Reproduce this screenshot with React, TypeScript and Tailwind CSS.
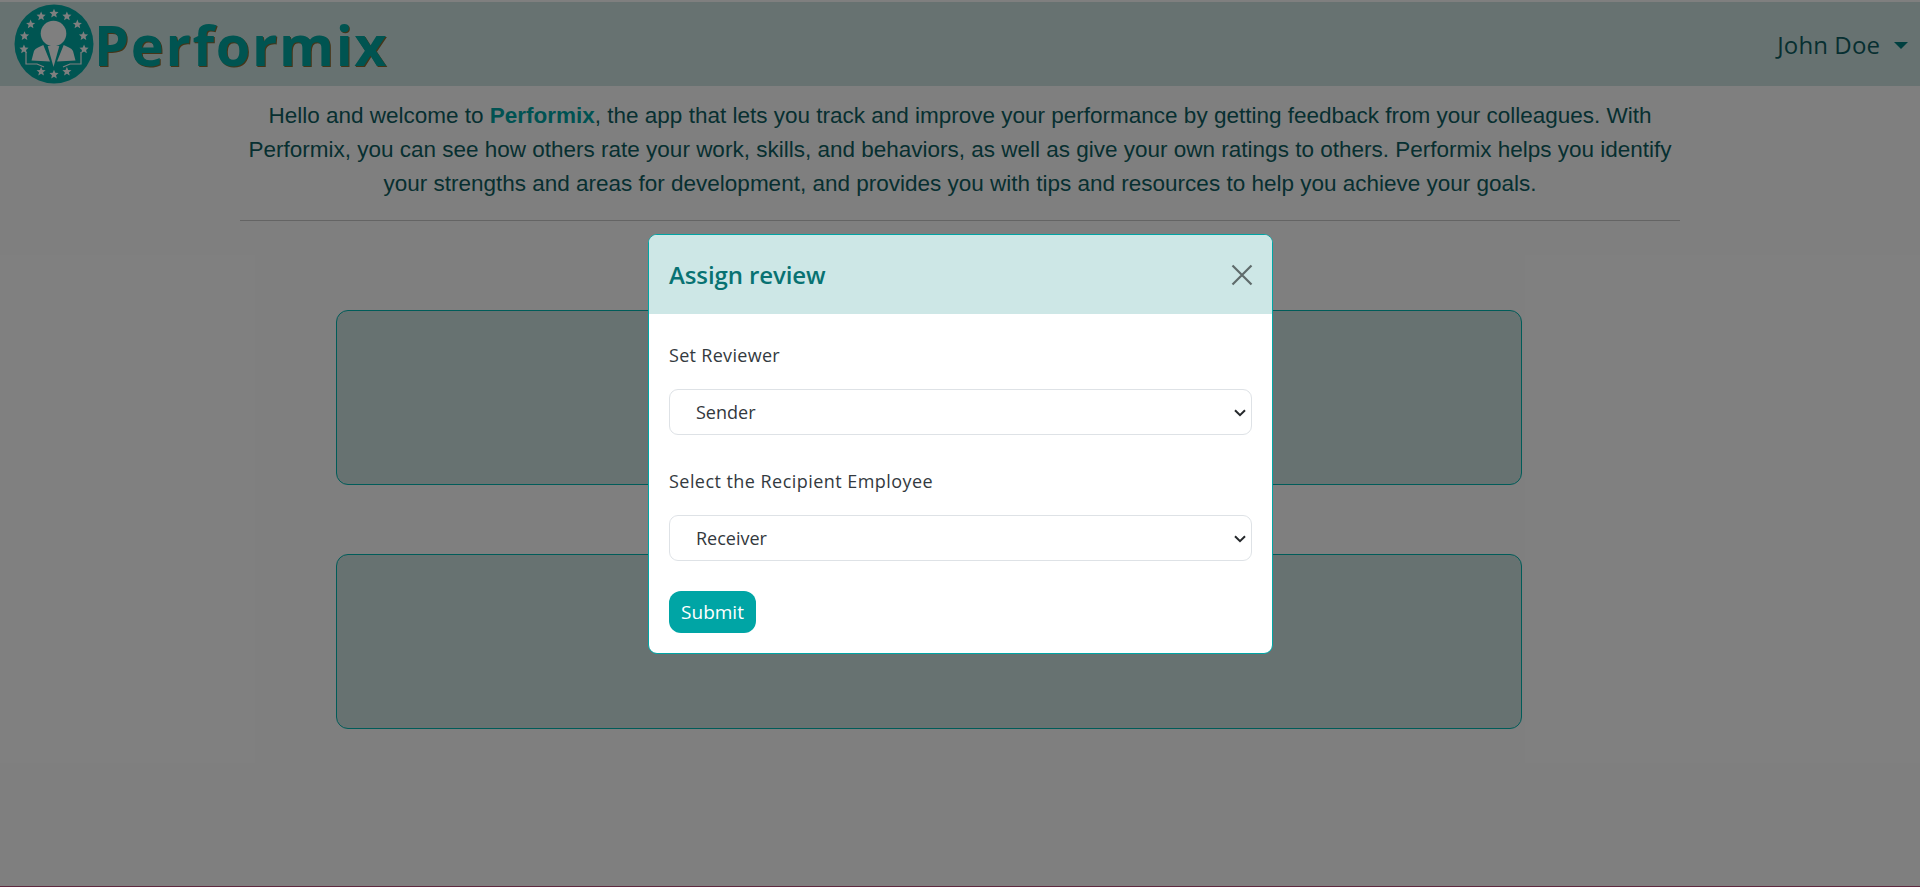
const SEGOE = 'font-["Open_Sans",sans-serif]';

// star ring of the logo, skipping the gaps around the shoulders
const STAR_ANGLES = [-90, -65, -40, -115, -140, -165, -15, 10, 170, 65, 90, 115];

function starPoints(cx: number, cy: number, r: number) {
  const pts: string[] = [];
  for (let i = 0; i < 10; i++) {
    const a = (-90 + i * 36) * (Math.PI / 180);
    const rad = i % 2 === 0 ? r : r * 0.45;
    pts.push(`${(cx + Math.cos(a) * rad).toFixed(2)},${(cy + Math.sin(a) * rad).toFixed(2)}`);
  }
  return pts.join(' ');
}

function LogoMark() {
  return (
    <svg width="80" height="80" viewBox="0 0 80 80" className="shrink-0">
      <circle cx="40" cy="40" r="39.5" fill="#00aaa5" />
      {STAR_ANGLES.map((deg) => {
        const a = deg * (Math.PI / 180);
        return <polygon key={deg} points={starPoints(40 + Math.cos(a) * 30.5, 40 + Math.sin(a) * 30.5, 4.8)} fill="#ffffff" />;
      })}
      <circle cx="39.5" cy="29.5" r="12.8" fill="#ffffff" />
      <path d="M17.5 56.5 L20 47 Q21 44.5 24 43.5 L29.3 41 L36 57.5 Z" fill="#ffffff" />
      <path d="M61.5 56.5 L59 47 Q58 44.5 55 43.5 L49.7 41 L43 57.5 Z" fill="#ffffff" />
      <path d="M33.7 42 L45.3 42 L39.5 63 Z" fill="#ffffff" />
      <path d="M12 48 L12 60 L23 60 L30 63 M67 48 L67 60 L56 60 L49 63" fill="none" stroke="#ffffff" strokeWidth="1.2" />
    </svg>
  );
}

function ReviewSelect({ value }: { value: string }) {
  return (
    <div className="relative">
      <select
        defaultValue={value}
        className={`${SEGOE} block h-[46px] w-full appearance-none rounded-[9px] border border-[#dee2e6] bg-white pl-[26px] pr-6 pt-[1px] text-[18px] text-[#33383d]`}
      >
        <option value={value}>{value}</option>
      </select>
      <svg width="12" height="8" viewBox="0 0 12 8" fill="none" stroke="#26292c" strokeWidth="2" className="pointer-events-none absolute right-[6px] top-[20px]">
        <path d="M1 1.2 L6 6.2 L11 1.2" />
      </svg>
    </div>
  );
}

export default function App() {
  return (
    <div className="relative flex min-h-screen flex-col overflow-hidden bg-white pt-[2px]">
      <header className="flex h-[84px] shrink-0 items-center justify-between bg-[#cfe5e3] pl-[14px] pr-[12px]">
        <div className="flex items-center">
          <LogoMark />
          <span
            className={`${SEGOE} text-[56px] font-bold leading-none tracking-[1.6px] text-[#00a8a2] [text-shadow:1px_1px_0_#8a6a30]`}
          >
            Performix
          </span>
        </div>
        <div className={`${SEGOE} flex items-center gap-[14px] pt-[2px] text-[24px] tracking-[0.1px] text-[#0f5f62]`}>
          <span>John Doe</span>
          <span className="h-0 w-0 border-x-[7px] border-t-[7px] border-x-transparent border-t-[#007f7f]" />
        </div>
      </header>

      <main className="mx-auto flex w-[1440px] flex-col items-center pt-[13px]">
        <p className='w-full text-center font-["Liberation_Sans",Arial,sans-serif] text-[22.5px] leading-[34px] text-[#0f5f62]'>
          Hello and welcome to <b className="text-[#00a5a5]">Performix</b>, the app that lets you track and improve your performance by
          getting feedback from your colleagues. With
          <br />
          Performix, you can see how others rate your work, skills, and behaviors, as well as give your own ratings to others. Performix helps you identify
          <br />
          your strengths and areas for development, and provides you with tips and resources to help you achieve your goals.
        </p>
        <hr className="mt-[19px] w-full border-t border-[#c8c8c8]" />
        <div className="ml-[96px] mt-[89px] h-[175px] w-[1186px] self-start rounded-[12px] border border-[#00b8b2] bg-[#cfe5e3]" />
        <div className="ml-[96px] mt-[69px] h-[175px] w-[1186px] self-start rounded-[12px] border border-[#00b8b2] bg-[#cfe5e3]" />
      </main>

      <div className="mt-auto h-px w-full bg-[#be5480]" />

      {/* backdrop + modal */}
      <div className="absolute inset-0 bg-black/50" />
      <div className="absolute left-[648px] top-[234px] w-[625px] overflow-hidden rounded-[9px] border border-[#00a5a5] bg-white">
        <div className="flex h-[79px] items-center justify-between bg-[#cde7e6] pl-[20px] pr-[19px]">
          <h2 className={`${SEGOE} text-[24px] font-semibold tracking-[-0.1px] text-[#087272]`}>Assign review</h2>
          <svg width="22" height="22" viewBox="0 0 22 22" fill="none" stroke="#5f6b6b" strokeWidth="2.2">
            <path d="M1.5 1.5 L20.5 20.5 M20.5 1.5 L1.5 20.5" />
          </svg>
        </div>
        <div className={`${SEGOE} flex flex-col px-[20px] pb-[20px] pt-[28px] text-[18px] text-[#333a40]`}>
          <label className="leading-[27px] tracking-[0.3px]">Set Reviewer</label>
          <div className="mt-[20px]">
            <ReviewSelect value="Sender" />
          </div>
          <label className="mt-[33px] leading-[27px] tracking-[0.45px]">Select the Recipient Employee</label>
          <div className="mt-[20px]">
            <ReviewSelect value="Receiver" />
          </div>
          <button className="mt-[30px] h-[42px] w-[87px] rounded-[12px] bg-[#00a5a5] text-[19px] text-white">Submit</button>
        </div>
      </div>
    </div>
  );
}
